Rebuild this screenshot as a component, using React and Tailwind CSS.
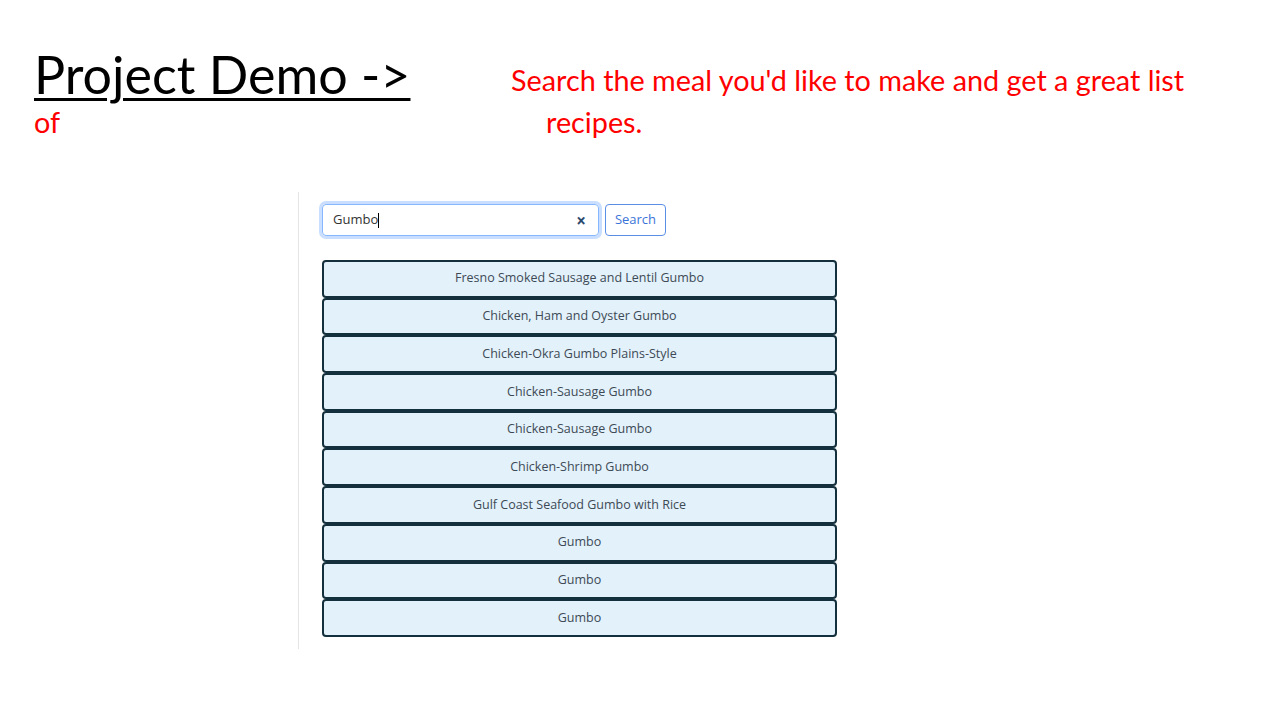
export default function App() {
  const items = [
    "Fresno Smoked Sausage and Lentil Gumbo",
    "Chicken, Ham and Oyster Gumbo",
    "Chicken-Okra Gumbo Plains-Style",
    "Chicken-Sausage Gumbo",
    "Chicken-Sausage Gumbo",
    "Chicken-Shrimp Gumbo",
    "Gulf Coast Seafood Gumbo with Rice",
    "Gumbo",
    "Gumbo",
    "Gumbo",
  ];
  return (
    <div className="w-[1280px] h-[720px] bg-white overflow-hidden relative" style={{ fontFamily: "Lato, sans-serif" }}>
      <div className="flex items-start pt-[44px] pl-[34px]">
        <div className="text-[52px] leading-[60px] text-black underline decoration-[3px] underline-offset-[4px] w-[477px]">Project Demo -&gt;</div>
        <div className="text-[28.8px] leading-[34px] text-[#ff0000] pt-[19px]">Search the meal you'd like to make and get a great list</div>
      </div>
      <div className="flex text-[28.8px] leading-[34px] text-[#ff0000] pl-[34px] mt-[1px]">
        <span className="w-[512px]">of</span>
        <span>recipes.</span>
      </div>
      <div className="ml-[298px] mt-[53px] w-[560px] h-[457px] border-l border-[#e5e5e5] pl-[23px] pt-[12px]" style={{ fontFamily: "'Open Sans', sans-serif" }}>
        <div className="flex items-center gap-[6px]">
          <div className="w-[277px] h-[32px] rounded-[4px] border border-[#86b7fe] shadow-[0_0_0_3px_rgba(13,110,253,0.22)] flex items-center pl-[10px] pr-[12px]">
            <span className="text-[13px] text-[#333]">Gumbo</span>
            <span className="w-px h-[15px] bg-black"></span>
            <span className="ml-auto text-[#2c4a6e] text-[17px] font-bold leading-none">×</span>
          </div>
          <div className="w-[61px] h-[32px] rounded-[4px] border border-[#5b8ee6] text-[#3b74d8] text-[13px] flex items-center justify-center">Search</div>
        </div>
        <div className="mt-[24px] w-[515px] flex flex-col">
          {items.map((t, i) => (
            <div key={i} className="h-[37.7px] rounded-[4px] border-2 border-[#14303d] bg-[#e3f1fb] flex items-center justify-center text-[12.5px] text-[#3d4a55]">
              {t}
            </div>
          ))}
        </div>
      </div>
    </div>
  );
}
